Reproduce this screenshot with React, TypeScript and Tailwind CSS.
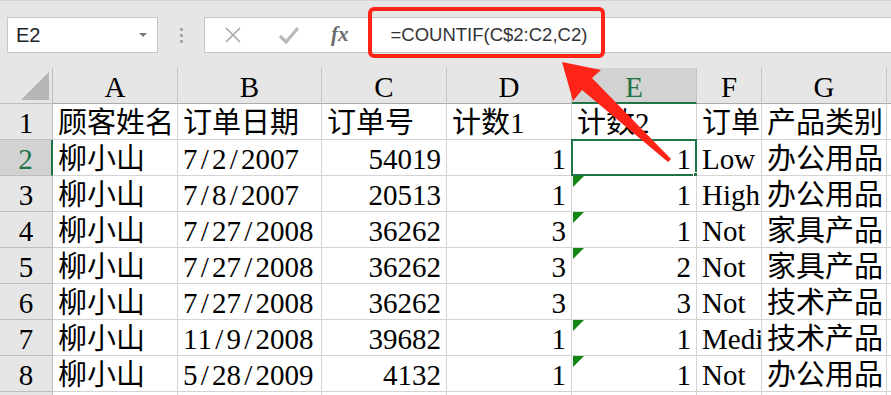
import React from "react";

const cols = [53, 125, 144, 125, 125, 125, 65, 125];
const letters = ["A", "B", "C", "D", "E", "F", "G"];

const rows: string[][] = [
  ["顾客姓名", "订单日期", "订单号", "计数1", "计数2", "订单", "产品类别"],
  ["柳小山", "7/2/2007", "54019", "1", "1", "Low", "办公用品"],
  ["柳小山", "7/8/2007", "20513", "1", "1", "High", "办公用品"],
  ["柳小山", "7/27/2008", "36262", "3", "1", "Not", "家具产品"],
  ["柳小山", "7/27/2008", "36262", "3", "2", "Not", "家具产品"],
  ["柳小山", "7/27/2008", "36262", "3", "3", "Not", "技术产品"],
  ["柳小山", "11/9/2008", "39682", "1", "1", "Medi", "技术产品"],
  ["柳小山", "5/28/2009", "4132", "1", "1", "Not", "办公用品"],
];

// rows (1-based) where column E shows the green error triangle
const flagged = [3, 4, 5, 7, 8];

const cellFont = {
  fontFamily: '"Liberation Serif", "Noto Sans CJK SC", serif',
};

// the sheet font sets digits and slashes on a fixed half-em pitch
function Text({ v }: { v: string }) {
  return (
    <span>
      {v.split("").map((ch, i) =>
        /[0-9/]/.test(ch) ? (
          <span key={i} className="inline-block w-[0.5em] text-center">
            {ch}
          </span>
        ) : (
          <React.Fragment key={i}>{ch}</React.Fragment>
        )
      )}
    </span>
  );
}

function Toolbar() {
  return (
    <div className="h-[68px] bg-[#e6e6e6] border-t border-[#d4d4d4] flex items-start pt-[16px] pl-[7px]">
      <div className="w-[151px] h-[36px] bg-white border border-[#c6c6c6] flex items-center justify-between pl-[8px] pr-[10px]">
        <span
          className="text-[20px] text-[#222]"
          style={{ fontFamily: '"Liberation Sans", sans-serif' }}
        >
          E2
        </span>
        <span className="w-0 h-0 border-l-[4px] border-r-[4px] border-t-[4px] border-l-transparent border-r-transparent border-t-[#777]" />
      </div>
      <div className="w-[46px] h-[36px] flex flex-col items-center justify-center gap-[3px]">
        <span className="w-[3px] h-[3px] bg-[#a8a8a8]" />
        <span className="w-[3px] h-[3px] bg-[#a8a8a8]" />
        <span className="w-[3px] h-[3px] bg-[#a8a8a8]" />
      </div>
      <div className="flex-1 h-[36px] bg-white border border-[#c6c6c6] border-r-0 flex items-center">
        <svg width="18" height="18" viewBox="0 0 18 18" className="ml-[19px]">
          <path d="M2 2 L16 16 M16 2 L2 16" stroke="#a6a6a6" strokeWidth="1.6" />
        </svg>
        <svg width="22" height="18" viewBox="0 0 22 18" className="ml-[36px]">
          <path d="M2 10 L8 16 L20 2" stroke="#b8b8b8" strokeWidth="3.2" fill="none" />
        </svg>
        <span
          className="ml-[31px] text-[21px] italic font-bold text-[#6b6b6b]"
          style={{ fontFamily: '"Liberation Serif", serif' }}
        >
          fx
        </span>
        <span
          className="ml-[42px] text-[18.5px] text-[#333]"
          style={{ fontFamily: '"Liberation Sans", sans-serif' }}
        >
          =COUNTIF(C$2:C2,C2)
        </span>
      </div>
    </div>
  );
}

function Grid() {
  const template = cols.map((w) => `${w}px`).join(" ") + " 1fr";
  return (
    <div
      className="grid text-[29px] text-black"
      style={{ gridTemplateColumns: template, gridAutoRows: "36px", ...cellFont }}
    >
      {/* header row */}
      <div className="bg-[#e6e6e6] border-r border-b border-[#bdbdbd] relative">
        <svg width="28" height="28" viewBox="0 0 28 28" className="absolute right-[3px] bottom-[3px]">
          <polygon points="28,0 28,28 0,28" fill="#b6b6b6" />
        </svg>
      </div>
      {letters.map((l) => (
        <div
          key={l}
          className={
            l === "E"
              ? "bg-[#d2d2d2] border-r border-[#c4c4c4] border-b-2 border-b-[#217346] text-[#217346] flex items-end justify-center leading-none"
              : "bg-[#e6e6e6] border-r border-b border-r-[#c4c4c4] border-b-[#ababab] flex items-end justify-center leading-none pb-[1px]"
          }
        >
          {l}
        </div>
      ))}
      <div className="bg-[#e6e6e6] border-b border-[#ababab]" />

      {/* body rows */}
      {[...rows, null].map((r, i) => {
        const n = i + 1;
        const selRow = n === 2;
        return (
          <React.Fragment key={n}>
            <div
              className={
                selRow
                  ? "bg-[#d2d2d2] text-[#217346] border-r-2 border-r-[#217346] border-b border-b-[#bdbdbd] flex items-end justify-center leading-none pb-[1px]"
                  : "bg-[#e6e6e6] border-r border-b border-[#bdbdbd] flex items-end justify-center leading-none pb-[1px]"
              }
            >
              {r ? n : ""}
            </div>
            {letters.map((l, c) => {
              const v = r ? r[c] : "";
              const right = n > 1 && (c === 2 || c === 3 || c === 4);
              const sel = selRow && l === "E";
              return (
                <div
                  key={l}
                  className={
                    "relative border-r border-b border-[#d4d4d4] bg-white flex items-end leading-none pb-[1px] whitespace-nowrap " +
                    (right ? "justify-end pr-[5px]" : "justify-start pl-[5px]") +
                    (c === 5 ? " overflow-hidden" : "")
                  }
                >
                  {v && <Text v={v} />}
                  {l === "E" && flagged.includes(n) && (
                    <span className="absolute left-[1px] top-0 w-0 h-0 border-t-[11px] border-r-[11px] border-t-[#128412] border-r-transparent" />
                  )}
                  {sel && (
                    <>
                      <span className="absolute left-[-1px] top-[-1px] right-[-1px] bottom-[-1px] border-2 border-[#217346]" />
                      <span className="absolute right-[-5px] bottom-[-5px] w-[8px] h-[8px] bg-[#217346] border border-white" />
                    </>
                  )}
                </div>
              );
            })}
            <div className="border-b border-[#d4d4d4] bg-white" />
          </React.Fragment>
        );
      })}
    </div>
  );
}

export default function App() {
  return (
    <div className="relative w-[891px] h-[395px] overflow-hidden bg-white">
      <Toolbar />
      <Grid />

      {/* red annotation frame around the formula */}
      <div className="absolute left-[368px] top-[7px] w-[237px] h-[51px] border-[4px] border-[#ff2318] rounded-[6px] pointer-events-none" />

      {/* red arrow */}
      <svg
        width="891"
        height="395"
        viewBox="0 0 891 395"
        className="absolute left-0 top-0 pointer-events-none"
      >
        <polygon
          points="562,62 601,70 592,78 671,159 668,162 582,90 573,101"
          fill="#ff2318"
        />
      </svg>
    </div>
  );
}
